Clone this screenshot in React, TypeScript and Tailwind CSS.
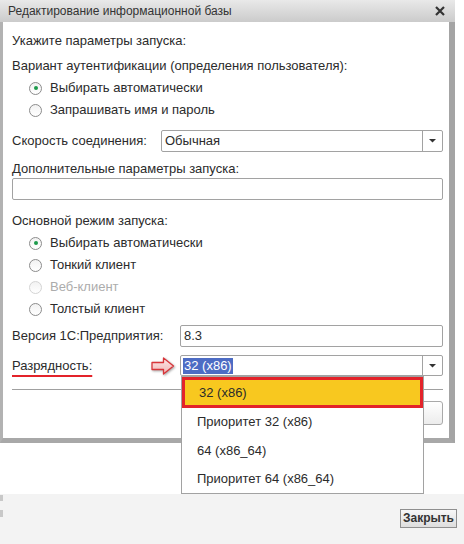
import React from 'react';

const font = { fontFamily: '"Liberation Sans", Arial, sans-serif' };

function Radio({ label, checked, disabled }: { label: string; checked?: boolean; disabled?: boolean }) {
  return (
    <div className="flex items-center h-[22px] pl-[17px]">
      <span
        className={
          'w-[13px] h-[13px] rounded-full border flex items-center justify-center bg-gradient-to-b from-[#f2f2f2] to-white ' +
          (disabled ? 'border-[#d4d4d4]' : 'border-[#8c8c8c]')
        }
      >
        {checked && <span className="w-[4px] h-[4px] rounded-full bg-[#1d9a4b]" />}
      </span>
      <span className={'ml-[8px] ' + (disabled ? 'text-[#acacac]' : 'text-[#2b2b2b]')}>{label}</span>
    </div>
  );
}

function Caret() {
  return (
    <svg width="7" height="4" viewBox="0 0 7 4">
      <polygon points="0,0 7,0 3.5,3.5" fill="#333" />
    </svg>
  );
}

function Arrow() {
  return (
    <svg width="24" height="18" viewBox="0 0 24 18" className="drop-shadow-[1px_1px_1px_rgba(0,0,0,0.35)]">
      <defs>
        <linearGradient id="ag" x1="0" y1="0" x2="0" y2="1">
          <stop offset="0" stopColor="#fde9e9" />
          <stop offset="1" stopColor="#f0b4b4" />
        </linearGradient>
      </defs>
      <polygon points="1,5.5 12.5,5.5 12.5,1 22.5,9 12.5,17 12.5,12.5 1,12.5" fill="url(#ag)" stroke="#d8353a" strokeWidth="1.3" strokeLinejoin="round" />
    </svg>
  );
}

export default function App() {
  const items = ['Приоритет 32 (x86)', '64 (x86_64)', 'Приоритет 64 (x86_64)'];
  return (
    <div className="w-[464px] h-[544px] bg-white overflow-hidden text-[13px] text-[#2b2b2b]" style={font}>
      <div className="w-[455px] flex flex-col">
        {/* title bar */}
        <div className="h-[22px] flex items-center justify-between pl-[8px] pr-[10px] bg-gradient-to-b from-[#e9e9e9] to-[#cbcbcb]">
          <span className="text-[12px] text-[#333]">Редактирование информационной базы</span>
          <svg width="10" height="10" viewBox="0 0 10 10">
            <path d="M1 1 L9 9 M9 1 L1 9" stroke="#333" strokeWidth="2.2" />
          </svg>
        </div>

        {/* body */}
        <div className="h-[421px] bg-white border-l-[3px] border-l-[#b2b2b2] border-r-[6px] border-r-[#a4a4a4] border-b-[5px] border-b-[#a8a8a8] pl-[9px] pr-[6px] flex flex-col">
          <div className="h-[22px] mt-[8px] flex items-center">Укажите параметры запуска:</div>
          <div className="h-[22px] mt-[3px] flex items-center">Вариант аутентификации (определения пользователя):</div>
          <Radio label="Выбирать автоматически" checked />
          <Radio label="Запрашивать имя и пароль" />

          <div className="h-[22px] mt-[9px] flex items-center">
            <span className="w-[149px]">Скорость соединения:</span>
            <div className="flex-1 h-[22px] flex border border-[#a2a2a2] rounded-[2px]">
              <span className="flex-1 flex items-center pl-[3px]">Обычная</span>
              <span className="w-[20px] border-l border-[#a2a2a2] flex items-center justify-center">
                <Caret />
              </span>
            </div>
          </div>

          <div className="h-[18px] mt-[8px] flex items-center">Дополнительные параметры запуска:</div>
          <div className="h-[22px] border border-[#a2a2a2] rounded-[2px]" />

          <div className="h-[22px] mt-[10px] flex items-center">Основной режим запуска:</div>
          <Radio label="Выбирать автоматически" checked />
          <Radio label="Тонкий клиент" />
          <Radio label="Веб-клиент" disabled />
          <Radio label="Толстый клиент" />

          <div className="h-[22px] mt-[5px] flex items-center">
            <span className="w-[168px]">Версия 1С:Предприятия:</span>
            <div className="flex-1 h-[22px] flex items-center pl-[3px] border border-[#a2a2a2] rounded-[2px]">8.3</div>
          </div>

          <div className="h-[21px] mt-[8px] flex items-center">
            <div className="w-[168px] flex items-center justify-between pr-[5px]">
              <span className="underline decoration-[#e3232a] decoration-2 underline-offset-[5px]">Разрядность:</span>
              <Arrow />
            </div>
            <div className="relative flex-1 h-[21px] flex border border-[#a2a2a2] rounded-[2px]">
              <span className="flex-1 flex items-center pl-[2px]">
                <span className="bg-[#4d6cc4] text-white leading-[16px] px-[1px]">32 (x86)</span>
              </span>
              <span className="w-[20px] border-l border-[#a2a2a2] flex items-center justify-center">
                <Caret />
              </span>
              {/* dropdown list */}
              <div className="absolute z-10 left-0 top-[20px] w-[243px] h-[118px] bg-white border border-[#a2a2a2] flex flex-col">
                <div className="h-[31px] bg-[#f8c81f] border-[3px] border-[#e3232a] flex items-center pl-[14px]">32 (x86)</div>
                {items.map((t) => (
                  <div key={t} className="h-[29px] flex items-center pl-[15px]">{t}</div>
                ))}
              </div>
            </div>
          </div>

          <div className="mt-[13px] border-t border-[#a0a0a0]" />

          <div className="mt-[11px] flex justify-end">
            <button className="w-[90px] h-[24px] rounded-[3px] border border-[#a9a9a9] bg-gradient-to-b from-white to-[#ececec]">
              OK
            </button>
          </div>
        </div>
      </div>

      <div className="h-[51px]" />

      {/* bottom panel */}
      <div className="h-[50px] bg-[#f3f3f3] relative flex flex-col">
        <div className="flex flex-col gap-[9px] pt-[1px]">
          <div className="w-[3px] h-[6px] bg-[#c8c8c8]" />
          <div className="w-[3px] h-[7px] bg-[#c8c8c8]" />
        </div>
        <div className="flex justify-end pr-[7px] -mt-[8px]">
          <button className="h-[19px] px-[2px] border border-[#8f8f8f] bg-gradient-to-b from-[#f7f7f7] to-[#dedede] text-[12px] font-bold text-[#333] leading-[17px]">
            Закрыть
          </button>
        </div>
      </div>
    </div>
  );
}
